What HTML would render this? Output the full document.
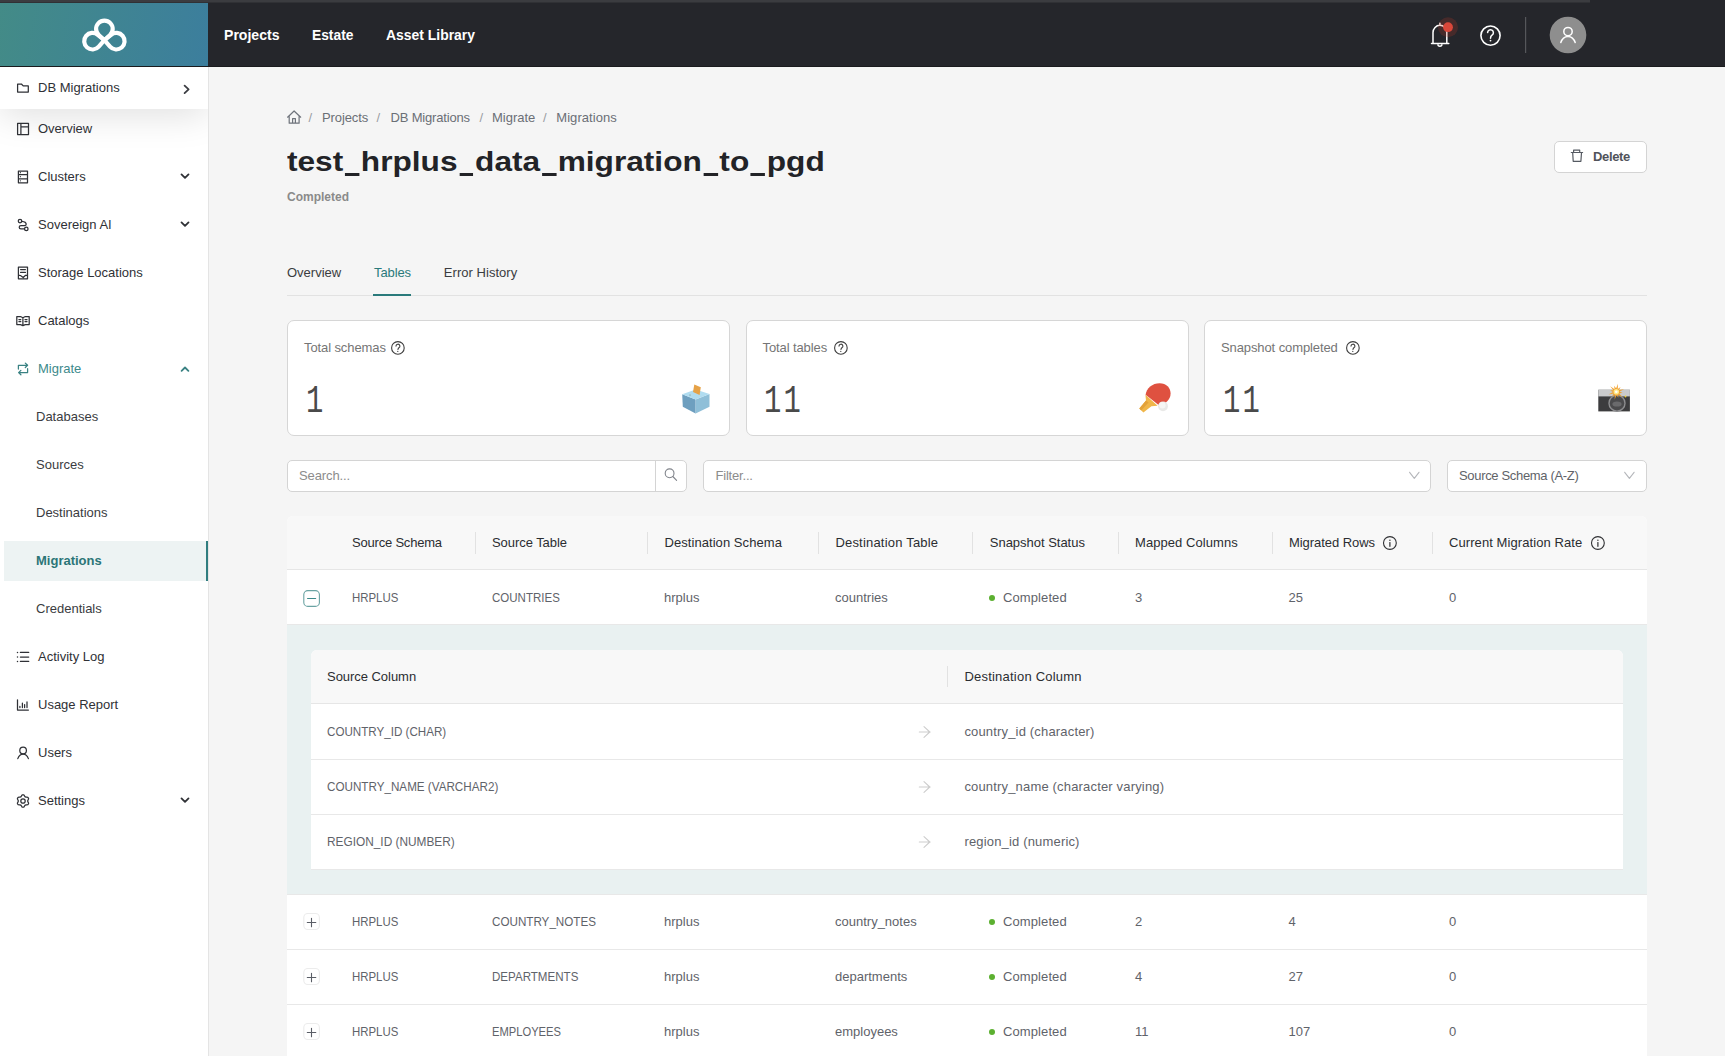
<!DOCTYPE html><html><head><meta charset="utf-8"><title>Migrations</title><style>
*{box-sizing:border-box;margin:0;padding:0}
html,body{width:1725px;height:1056px;overflow:hidden;background:#f5f5f5;font-family:"Liberation Sans", sans-serif}
.t{position:absolute;white-space:nowrap;line-height:20px}
.a{position:absolute}
svg{position:absolute;overflow:visible}
</style></head><body>
<div class="a" style="left:0;top:0;width:1725px;height:67px;background:#25262b"></div>
<div class="a" style="left:0;top:3px;width:208px;height:64px;background:linear-gradient(100deg,#438b87 0%,#3c7e9d 100%)"></div>
<div class="a" style="left:0;top:0;width:1590px;height:2px;background:#3b3c40"></div>
<div class="a" style="left:0;top:2px;width:1590px;height:1px;background:#303135"></div>
<div class="a" style="left:0;top:66px;width:1725px;height:1px;background:#1a1b1e"></div>
<div class="t" style="left:223.5px;top:25.2px;font-size:15.5px;color:#fff;letter-spacing:0px;font-weight:700;transform:scaleX(0.907);transform-origin:0 0">Projects</div>
<div class="t" style="left:311.5px;top:25.2px;font-size:15.5px;color:#fff;letter-spacing:0px;font-weight:700;transform:scaleX(0.89);transform-origin:0 0">Estate</div>
<div class="t" style="left:385.5px;top:25.2px;font-size:15.5px;color:#fff;letter-spacing:0px;font-weight:700;transform:scaleX(0.898);transform-origin:0 0">Asset Library</div>
<div class="a" style="left:0;top:67px;width:209px;height:989px;background:#fff;border-right:1px solid #e4e4e4"></div>
<div class="a" style="left:0;top:67px;width:208px;height:120px;overflow:hidden"><div class="a" style="left:0;top:0;width:208px;height:42px;background:#fff;box-shadow:0 6px 36px 0 rgba(0,0,0,0.13)"></div></div>
<div class="a" style="left:4px;top:541px;width:204px;height:40px;background:#edf3f3;border-right:2px solid #2f7d7f"></div>
<div class="t" style="left:38px;top:78.0px;font-size:13px;color:#2f3136;letter-spacing:0px;font-weight:400;">DB Migrations</div>
<!--chev DB Migrations-->
<div class="t" style="left:38px;top:119.1px;font-size:13px;color:#2f3136;letter-spacing:0px;font-weight:400;">Overview</div>
<div class="t" style="left:38px;top:167.1px;font-size:13px;color:#2f3136;letter-spacing:0px;font-weight:400;">Clusters</div>
<!--chev Clusters-->
<div class="t" style="left:38px;top:215.1px;font-size:13px;color:#2f3136;letter-spacing:0px;font-weight:400;">Sovereign AI</div>
<!--chev Sovereign AI-->
<div class="t" style="left:38px;top:263.1px;font-size:13px;color:#2f3136;letter-spacing:0px;font-weight:400;">Storage Locations</div>
<div class="t" style="left:38px;top:311.1px;font-size:13px;color:#2f3136;letter-spacing:0px;font-weight:400;">Catalogs</div>
<div class="t" style="left:38px;top:359.1px;font-size:13px;color:#3d8a8b;letter-spacing:0px;font-weight:400;">Migrate</div>
<!--chev Migrate-->
<div class="t" style="left:36px;top:407.1px;font-size:13px;color:#3a3c41;letter-spacing:0px;font-weight:400;">Databases</div>
<div class="t" style="left:36px;top:455.1px;font-size:13px;color:#3a3c41;letter-spacing:0px;font-weight:400;">Sources</div>
<div class="t" style="left:36px;top:503.1px;font-size:13px;color:#3a3c41;letter-spacing:0px;font-weight:400;">Destinations</div>
<div class="t" style="left:36px;top:551.1px;font-size:13px;color:#2b7577;letter-spacing:0px;font-weight:700;">Migrations</div>
<div class="t" style="left:36px;top:599.1px;font-size:13px;color:#3a3c41;letter-spacing:0px;font-weight:400;">Credentials</div>
<div class="t" style="left:38px;top:647.1px;font-size:13px;color:#2f3136;letter-spacing:0px;font-weight:400;">Activity Log</div>
<div class="t" style="left:38px;top:695.1px;font-size:13px;color:#2f3136;letter-spacing:0px;font-weight:400;">Usage Report</div>
<div class="t" style="left:38px;top:743.1px;font-size:13px;color:#2f3136;letter-spacing:0px;font-weight:400;">Users</div>
<div class="t" style="left:38px;top:791.1px;font-size:13px;color:#2f3136;letter-spacing:0px;font-weight:400;">Settings</div>
<!--chev Settings-->
<div class="t" style="left:322px;top:107.7px;font-size:13px;color:#6b6f76;letter-spacing:-0.1px;font-weight:400;">Projects</div>
<div class="t" style="left:390.5px;top:107.7px;font-size:13px;color:#6b6f76;letter-spacing:-0.18px;font-weight:400;">DB Migrations</div>
<div class="t" style="left:492px;top:107.7px;font-size:13px;color:#6b6f76;letter-spacing:0px;font-weight:400;">Migrate</div>
<div class="t" style="left:556.3px;top:107.7px;font-size:13px;color:#6b6f76;letter-spacing:0.05px;font-weight:400;">Migrations</div>
<div class="t" style="left:308.5px;top:107.7px;font-size:13px;color:#9a9da3;letter-spacing:0px;font-weight:400;">/</div>
<div class="t" style="left:376.5px;top:107.7px;font-size:13px;color:#9a9da3;letter-spacing:0px;font-weight:400;">/</div>
<div class="t" style="left:479.5px;top:107.7px;font-size:13px;color:#9a9da3;letter-spacing:0px;font-weight:400;">/</div>
<div class="t" style="left:543px;top:107.7px;font-size:13px;color:#9a9da3;letter-spacing:0px;font-weight:400;">/</div>
<div class="t" style="left:286.5px;top:153.7px;font-size:28.4px;color:#222327;letter-spacing:0px;font-weight:700;line-height:40px;top:141px;transform:scaleX(1.114);transform-origin:0 0">test<span style="display:inline-block;width:15.79px;height:0;position:relative"><span style="position:absolute;left:1.5px;right:1.5px;top:1.6px;height:3.2px;background:#222327"></span></span>hrplus<span style="display:inline-block;width:15.79px;height:0;position:relative"><span style="position:absolute;left:1.5px;right:1.5px;top:1.6px;height:3.2px;background:#222327"></span></span>data<span style="display:inline-block;width:15.79px;height:0;position:relative"><span style="position:absolute;left:1.5px;right:1.5px;top:1.6px;height:3.2px;background:#222327"></span></span>migration<span style="display:inline-block;width:15.79px;height:0;position:relative"><span style="position:absolute;left:1.5px;right:1.5px;top:1.6px;height:3.2px;background:#222327"></span></span>to<span style="display:inline-block;width:15.79px;height:0;position:relative"><span style="position:absolute;left:1.5px;right:1.5px;top:1.6px;height:3.2px;background:#222327"></span></span>pgd</div>
<div class="t" style="left:287px;top:186.7px;font-size:12px;color:#8a8a8a;letter-spacing:0px;font-weight:700;">Completed</div>
<div class="a" style="left:1554px;top:141px;width:93px;height:32px;background:#fff;border:1px solid #d4d4d4;border-radius:5px"></div>
<div class="t" style="left:1593px;top:147.2px;font-size:13px;color:#50535a;letter-spacing:-0.35px;font-weight:700;">Delete</div>
<div class="t" style="left:287px;top:263.2px;font-size:13px;color:#3a3c40;letter-spacing:0px;font-weight:400;">Overview</div>
<div class="t" style="left:374px;top:263.2px;font-size:13px;color:#2a7a7b;letter-spacing:-0.1px;font-weight:400;">Tables</div>
<div class="t" style="left:443.8px;top:263.2px;font-size:13px;color:#3a3c40;letter-spacing:0.04px;font-weight:400;">Error History</div>
<div class="a" style="left:287px;top:295px;width:1360px;height:1px;background:#e2e2e2"></div>
<div class="a" style="left:373px;top:294px;width:38px;height:2px;background:#2a7a7b"></div>
<div class="a" style="left:287px;top:320px;width:443px;height:116px;background:#fff;border:1px solid #d6d6d6;border-radius:7px"></div>
<div class="t" style="left:304px;top:338.0px;font-size:13px;color:#757575;letter-spacing:-0.1px;font-weight:400;">Total schemas</div>
<div class="t" style="left:305.5px;top:382px;font-family:'Liberation Mono',monospace;font-size:38px;line-height:40px;color:#4a4a4a;letter-spacing:3px;transform:scaleX(.76);transform-origin:0 0">1</div>
<div class="a" style="left:745.5px;top:320px;width:443px;height:116px;background:#fff;border:1px solid #d6d6d6;border-radius:7px"></div>
<div class="t" style="left:762.5px;top:338.0px;font-size:13px;color:#757575;letter-spacing:-0.1px;font-weight:400;">Total tables</div>
<div class="t" style="left:764.0px;top:382px;font-family:'Liberation Mono',monospace;font-size:38px;line-height:40px;color:#4a4a4a;letter-spacing:3px;transform:scaleX(.76);transform-origin:0 0">11</div>
<div class="a" style="left:1204px;top:320px;width:443px;height:116px;background:#fff;border:1px solid #d6d6d6;border-radius:7px"></div>
<div class="t" style="left:1221px;top:338.0px;font-size:13px;color:#757575;letter-spacing:-0.1px;font-weight:400;">Snapshot completed</div>
<div class="t" style="left:1222.5px;top:382px;font-family:'Liberation Mono',monospace;font-size:38px;line-height:40px;color:#4a4a4a;letter-spacing:3px;transform:scaleX(.76);transform-origin:0 0">11</div>
<div class="a" style="left:287px;top:460px;width:400px;height:32px;background:#fff;border:1px solid #d4d4d4;border-radius:5px"></div>
<div class="a" style="left:655px;top:461px;width:1px;height:30px;background:#d4d4d4"></div>
<div class="t" style="left:299px;top:466.2px;font-size:13px;color:#8c8c8c;letter-spacing:-0.1px;font-weight:400;">Search...</div>
<div class="a" style="left:703px;top:460px;width:728px;height:32px;background:#fff;border:1px solid #d4d4d4;border-radius:5px"></div>
<div class="t" style="left:715.5px;top:466.2px;font-size:13px;color:#8c8c8c;letter-spacing:-0.2px;font-weight:400;">Filter...</div>
<div class="a" style="left:1447px;top:460px;width:200px;height:32px;background:#fff;border:1px solid #d4d4d4;border-radius:5px"></div>
<div class="t" style="left:1459px;top:466.2px;font-size:13px;color:#5f6368;letter-spacing:-0.33px;font-weight:400;">Source Schema (A-Z)</div>
<div class="a" style="left:287px;top:516px;width:1360px;height:540px;background:#fff;border-radius:6px 6px 0 0;overflow:hidden">
<div class="a" style="left:0;top:0;width:1360px;height:54px;background:#f8f8f8;border-bottom:1px solid #e6e6e6"></div>
<div class="a" style="left:0;top:109px;width:1360px;height:269px;background:#e9f1f1"></div>
<div class="a" style="left:0;top:108px;width:1360px;height:1px;background:#e8e8e8"></div>
<div class="a" style="left:0;top:378px;width:1360px;height:1px;background:#e8e8e8"></div>
<div class="a" style="left:0;top:433px;width:1360px;height:1px;background:#e8e8e8"></div>
<div class="a" style="left:0;top:488px;width:1360px;height:1px;background:#e8e8e8"></div>
</div>
<div class="a" style="left:475px;top:532px;width:1px;height:22px;background:#e2e2e2"></div>
<div class="a" style="left:647px;top:532px;width:1px;height:22px;background:#e2e2e2"></div>
<div class="a" style="left:818px;top:532px;width:1px;height:22px;background:#e2e2e2"></div>
<div class="a" style="left:972px;top:532px;width:1px;height:22px;background:#e2e2e2"></div>
<div class="a" style="left:1118px;top:532px;width:1px;height:22px;background:#e2e2e2"></div>
<div class="a" style="left:1272px;top:532px;width:1px;height:22px;background:#e2e2e2"></div>
<div class="a" style="left:1432px;top:532px;width:1px;height:22px;background:#e2e2e2"></div>
<div class="t" style="left:352px;top:533.2px;font-size:13px;color:#2b2d31;letter-spacing:-0.2px;font-weight:400;">Source Schema</div>
<div class="t" style="left:492px;top:533.2px;font-size:13px;color:#2b2d31;letter-spacing:-0.06px;font-weight:400;">Source Table</div>
<div class="t" style="left:664.5px;top:533.2px;font-size:13px;color:#2b2d31;letter-spacing:0.06px;font-weight:400;">Destination Schema</div>
<div class="t" style="left:835.4px;top:533.2px;font-size:13px;color:#2b2d31;letter-spacing:0.2px;font-weight:400;">Destination Table</div>
<div class="t" style="left:989.8px;top:533.2px;font-size:13px;color:#2b2d31;letter-spacing:-0.02px;font-weight:400;">Snapshot Status</div>
<div class="t" style="left:1135px;top:533.2px;font-size:13px;color:#2b2d31;letter-spacing:0.07px;font-weight:400;">Mapped Columns</div>
<div class="t" style="left:1289px;top:533.2px;font-size:13px;color:#2b2d31;letter-spacing:-0.06px;font-weight:400;">Migrated Rows</div>
<div class="t" style="left:1449px;top:533.2px;font-size:13px;color:#2b2d31;letter-spacing:0.08px;font-weight:400;">Current Migration Rate</div>
<div class="a" style="left:311px;top:650px;width:1312px;height:220px;background:#fff;border-radius:6px 6px 0 0;overflow:hidden">
<div class="a" style="left:0;top:0;width:1312px;height:54px;background:#f8f8f8;border-bottom:1px solid #e6e6e6"></div>
<div class="a" style="left:0;top:109px;width:1312px;height:1px;background:#e8e8e8"></div>
<div class="a" style="left:0;top:164px;width:1312px;height:1px;background:#e8e8e8"></div>
<div class="a" style="left:0;top:219px;width:1312px;height:1px;background:#e8e8e8"></div>
</div>
<div class="a" style="left:947px;top:666px;width:1px;height:21px;background:#e2e2e2"></div>
<div class="t" style="left:327px;top:667.3px;font-size:13px;color:#2b2d31;letter-spacing:-0.04px;font-weight:400;">Source Column</div>
<div class="t" style="left:964.4px;top:667.3px;font-size:13px;color:#2b2d31;letter-spacing:0.22px;font-weight:400;">Destination Column</div>
<div class="t" style="left:327px;top:722.2px;font-size:13px;color:#5f636a;letter-spacing:0px;font-weight:400;transform:scaleX(0.894);transform-origin:0 0">COUNTRY_ID (CHAR)</div>
<div class="t" style="left:964.4px;top:722.2px;font-size:13px;color:#5f636a;letter-spacing:0.17px;font-weight:400;">country_id (character)</div>
<div class="t" style="left:327px;top:777.2px;font-size:13px;color:#5f636a;letter-spacing:0px;font-weight:400;transform:scaleX(0.897);transform-origin:0 0">COUNTRY_NAME (VARCHAR2)</div>
<div class="t" style="left:964.4px;top:777.2px;font-size:13px;color:#5f636a;letter-spacing:0.17px;font-weight:400;">country_name (character varying)</div>
<div class="t" style="left:327px;top:832.2px;font-size:13px;color:#5f636a;letter-spacing:0px;font-weight:400;transform:scaleX(0.912);transform-origin:0 0">REGION_ID (NUMBER)</div>
<div class="t" style="left:964.4px;top:832.2px;font-size:13px;color:#5f636a;letter-spacing:0.17px;font-weight:400;">region_id (numeric)</div>
<div class="t" style="left:352px;top:588.3px;font-size:13px;color:#5f636a;letter-spacing:0px;font-weight:400;transform:scaleX(0.878);transform-origin:0 0">HRPLUS</div>
<div class="t" style="left:492px;top:588.3px;font-size:13px;color:#5f636a;letter-spacing:0px;font-weight:400;transform:scaleX(0.886);transform-origin:0 0">COUNTRIES</div>
<div class="t" style="left:664px;top:588.3px;font-size:13px;color:#5f636a;letter-spacing:0px;font-weight:400;">hrplus</div>
<div class="t" style="left:835px;top:588.3px;font-size:13px;color:#5f636a;letter-spacing:0px;font-weight:400;">countries</div>
<div class="a" style="left:989px;top:595.1px;width:6px;height:6px;border-radius:50%;background:#5cb030"></div>
<div class="t" style="left:1003px;top:588.3px;font-size:13px;color:#5f636a;letter-spacing:0.1px;font-weight:400;">Completed</div>
<div class="t" style="left:1135px;top:588.3px;font-size:13px;color:#5f636a;letter-spacing:0px;font-weight:400;">3</div>
<div class="t" style="left:1288.5px;top:588.3px;font-size:13px;color:#5f636a;letter-spacing:0px;font-weight:400;">25</div>
<div class="t" style="left:1449px;top:588.3px;font-size:13px;color:#5f636a;letter-spacing:0px;font-weight:400;">0</div>
<div class="t" style="left:352px;top:912.2px;font-size:13px;color:#5f636a;letter-spacing:0px;font-weight:400;transform:scaleX(0.878);transform-origin:0 0">HRPLUS</div>
<div class="t" style="left:492px;top:912.2px;font-size:13px;color:#5f636a;letter-spacing:0px;font-weight:400;transform:scaleX(0.896);transform-origin:0 0">COUNTRY_NOTES</div>
<div class="t" style="left:664px;top:912.2px;font-size:13px;color:#5f636a;letter-spacing:0px;font-weight:400;">hrplus</div>
<div class="t" style="left:835px;top:912.2px;font-size:13px;color:#5f636a;letter-spacing:0px;font-weight:400;">country_notes</div>
<div class="a" style="left:989px;top:919.0px;width:6px;height:6px;border-radius:50%;background:#5cb030"></div>
<div class="t" style="left:1003px;top:912.2px;font-size:13px;color:#5f636a;letter-spacing:0.1px;font-weight:400;">Completed</div>
<div class="t" style="left:1135px;top:912.2px;font-size:13px;color:#5f636a;letter-spacing:0px;font-weight:400;">2</div>
<div class="t" style="left:1288.5px;top:912.2px;font-size:13px;color:#5f636a;letter-spacing:0px;font-weight:400;">4</div>
<div class="t" style="left:1449px;top:912.2px;font-size:13px;color:#5f636a;letter-spacing:0px;font-weight:400;">0</div>
<div class="t" style="left:352px;top:967.2px;font-size:13px;color:#5f636a;letter-spacing:0px;font-weight:400;transform:scaleX(0.878);transform-origin:0 0">HRPLUS</div>
<div class="t" style="left:492px;top:967.2px;font-size:13px;color:#5f636a;letter-spacing:0px;font-weight:400;transform:scaleX(0.89);transform-origin:0 0">DEPARTMENTS</div>
<div class="t" style="left:664px;top:967.2px;font-size:13px;color:#5f636a;letter-spacing:0px;font-weight:400;">hrplus</div>
<div class="t" style="left:835px;top:967.2px;font-size:13px;color:#5f636a;letter-spacing:0px;font-weight:400;">departments</div>
<div class="a" style="left:989px;top:974.0px;width:6px;height:6px;border-radius:50%;background:#5cb030"></div>
<div class="t" style="left:1003px;top:967.2px;font-size:13px;color:#5f636a;letter-spacing:0.1px;font-weight:400;">Completed</div>
<div class="t" style="left:1135px;top:967.2px;font-size:13px;color:#5f636a;letter-spacing:0px;font-weight:400;">4</div>
<div class="t" style="left:1288.5px;top:967.2px;font-size:13px;color:#5f636a;letter-spacing:0px;font-weight:400;">27</div>
<div class="t" style="left:1449px;top:967.2px;font-size:13px;color:#5f636a;letter-spacing:0px;font-weight:400;">0</div>
<div class="t" style="left:352px;top:1022.2px;font-size:13px;color:#5f636a;letter-spacing:0px;font-weight:400;transform:scaleX(0.878);transform-origin:0 0">HRPLUS</div>
<div class="t" style="left:492px;top:1022.2px;font-size:13px;color:#5f636a;letter-spacing:0px;font-weight:400;transform:scaleX(0.86);transform-origin:0 0">EMPLOYEES</div>
<div class="t" style="left:664px;top:1022.2px;font-size:13px;color:#5f636a;letter-spacing:0px;font-weight:400;">hrplus</div>
<div class="t" style="left:835px;top:1022.2px;font-size:13px;color:#5f636a;letter-spacing:0px;font-weight:400;">employees</div>
<div class="a" style="left:989px;top:1029.0px;width:6px;height:6px;border-radius:50%;background:#5cb030"></div>
<div class="t" style="left:1003px;top:1022.2px;font-size:13px;color:#5f636a;letter-spacing:0.1px;font-weight:400;">Completed</div>
<div class="t" style="left:1135px;top:1022.2px;font-size:13px;color:#5f636a;letter-spacing:0px;font-weight:400;">11</div>
<div class="t" style="left:1288.5px;top:1022.2px;font-size:13px;color:#5f636a;letter-spacing:0px;font-weight:400;">107</div>
<div class="t" style="left:1449px;top:1022.2px;font-size:13px;color:#5f636a;letter-spacing:0px;font-weight:400;">0</div>
<svg width="1725" height="1056" style="left:0;top:0" viewBox="0 0 1725 1056"><path d="M104.40,40.20L98.77,35.00A8.3,8.3 0 1 1 110.03,35.00Z" fill="none" stroke="#fff" stroke-width="4.2" stroke-linejoin="round"/><path d="M104.40,40.20L98.75,46.66A8.3,8.3 0 1 1 97.75,34.77Z" fill="none" stroke="#fff" stroke-width="4.2" stroke-linejoin="round"/><path d="M104.40,40.20L111.05,34.77A8.3,8.3 0 1 1 110.05,46.66Z" fill="none" stroke="#fff" stroke-width="4.2" stroke-linejoin="round"/><path d="M1433,43.4V32.5A6.9,7.2 0 0 1 1446.8,32.5V43.4M1431.5,43.4H1448.8M1439.9,24.8V23.2" fill="none" stroke="#fff" stroke-width="1.5" stroke-linecap="round"/><path d="M1437.9,44.2A2,2 0 0 0 1441.9,44.2" fill="none" stroke="#fff" stroke-width="1.5"/><circle cx="1448" cy="27.2" r="10" fill="#c0392b" fill-opacity="0.22"/><circle cx="1448" cy="27.2" r="4.9" fill="#d9473a"/><circle cx="1490.5" cy="35.6" r="9.6" fill="none" stroke="#fff" stroke-width="1.6"/><path d="M1487.6,32.6A2.9,2.9 0 1 1 1492,35.2C1490.9,36 1490.5,36.6 1490.5,38.3" fill="none" stroke="#fff" stroke-width="1.5" stroke-linecap="round"/><circle cx="1490.5" cy="40.6" r="0.9" fill="#fff"/><rect x="1525" y="17" width="1.2" height="36" fill="#56575b"/><circle cx="1568" cy="35" r="18.3" fill="#8e8e8e"/><circle cx="1568" cy="31.6" r="4.2" fill="none" stroke="#fff" stroke-width="1.5"/><path d="M1560.8,42.6C1562,38.8 1564.6,36.4 1568,36.4C1571.4,36.4 1574,38.8 1575.2,42.6" fill="none" stroke="#fff" stroke-width="1.5" stroke-linecap="round"/><path d="M17.6,84H21.4L23.2,85.9H28.3V92H17.6Z" fill="none" stroke="#2f3136" stroke-width="1.25" stroke-linejoin="round" stroke-linecap="round"/><path d="M17.6,123.3H28.5V134.6H17.6ZM20.9,123.3V134.6M20.9,126.8H28.5" fill="none" stroke="#2f3136" stroke-width="1.25" stroke-linejoin="round" stroke-linecap="round"/><path d="M18.4,171H27.5V182.8H18.4ZM18.4,174.7H27.5M18.4,178.8H27.5" fill="none" stroke="#2f3136" stroke-width="1.25" stroke-linejoin="round" stroke-linecap="round"/><circle cx="20.4" cy="172.7" r="0.6" fill="#2f3136"/><circle cx="20.4" cy="176.7" r="0.6" fill="#2f3136"/><circle cx="20.4" cy="180.8" r="0.6" fill="#2f3136"/><circle cx="20" cy="221" r="1.75" fill="none" stroke="#2f3136" stroke-width="1.25" stroke-linejoin="round" stroke-linecap="round"/><circle cx="26.3" cy="228.9" r="1.75" fill="none" stroke="#2f3136" stroke-width="1.25" stroke-linejoin="round" stroke-linecap="round"/><path d="M21.8,221.3C24,221.5 26.2,222.6 26.2,224.2C26.2,225.3 25.4,225.6 24.5,225.6H21C19.6,225.6 19.2,226.5 19.2,227.3C19.2,228.2 19.9,228.9 21,228.9H24.5" fill="none" stroke="#2f3136" stroke-width="1.25" stroke-linejoin="round" stroke-linecap="round"/><path d="M18.4,267H27.5V278.8H18.4ZM20.6,269.6H25.4M20.6,272.4H25.4M18.4,275.2L20.4,275.5L23.2,277.5L25.6,275.3H27.5" fill="none" stroke="#2f3136" stroke-width="1.25" stroke-linejoin="round" stroke-linecap="round"/><path d="M16.8,316.5H20.5L22.9,317.7L25.3,316.5H29.2V324.6H25.3L22.9,325.6L20.5,324.6H16.8ZM22.9,317.7V325.4" fill="none" stroke="#2f3136" stroke-width="1.25" stroke-linejoin="round" stroke-linecap="round"/><path d="M18.9,319.5H20.8M18.9,321.5H20.8M25,319.5H27M25,321.5H27" fill="none" stroke="#2f3136" stroke-width="1.25" stroke-linejoin="round" stroke-linecap="round"/><path d="M18.4,369V365.3H27.4M25.3,363.1L27.6,365.3L25.3,367.5M27.6,368.7V372.6H18.8M20.9,370.4L18.6,372.6L20.9,374.8" fill="none" stroke="#3a8283" stroke-width="1.25" stroke-linejoin="round" stroke-linecap="round"/><circle cx="17.5" cy="652.4" r="0.75" fill="#2f3136"/><path d="M20.4,652.4H28.7" fill="none" stroke="#2f3136" stroke-width="1.25" stroke-linejoin="round" stroke-linecap="round"/><circle cx="17.5" cy="657" r="0.75" fill="#2f3136"/><path d="M20.4,657H28.7" fill="none" stroke="#2f3136" stroke-width="1.25" stroke-linejoin="round" stroke-linecap="round"/><circle cx="17.5" cy="661.4" r="0.75" fill="#2f3136"/><path d="M20.4,661.4H28.7" fill="none" stroke="#2f3136" stroke-width="1.25" stroke-linejoin="round" stroke-linecap="round"/><path d="M17.5,699.8V710H28.4M19.9,706.3V707.6M22.4,703.2V707.6M24.6,704.5V707.6M27,701.9V707.6" fill="none" stroke="#2f3136" stroke-width="1.25" stroke-linejoin="round" stroke-linecap="round"/><circle cx="23.1" cy="750.5" r="3.3" fill="none" stroke="#2f3136" stroke-width="1.25" stroke-linejoin="round" stroke-linecap="round"/><path d="M17.8,758.6C18.9,755.6 20.7,754 23.1,754C25.5,754 27.3,755.6 28.4,758.6" fill="none" stroke="#2f3136" stroke-width="1.25" stroke-linejoin="round" stroke-linecap="round"/><path d="M23.00,794.90L23.80,794.95L24.41,795.74L24.84,796.57L25.40,796.84L25.92,797.19L26.85,797.15L27.84,797.29L28.28,797.95L28.64,798.67L28.26,799.59L27.76,800.37L27.80,801.00L27.76,801.63L28.26,802.41L28.64,803.33L28.28,804.05L27.84,804.71L26.85,804.85L25.92,804.81L25.40,805.16L24.84,805.43L24.41,806.26L23.80,807.05L23.00,807.10L22.20,807.05L21.59,806.26L21.16,805.43L20.60,805.16L20.08,804.81L19.15,804.85L18.16,804.71L17.72,804.05L17.36,803.33L17.74,802.41L18.24,801.63L18.20,801.00L18.24,800.37L17.74,799.59L17.36,798.67L17.72,797.95L18.16,797.29L19.15,797.15L20.08,797.19L20.60,796.84L21.16,796.57L21.59,795.74L22.20,794.95Z" fill="none" stroke="#2f3136" stroke-width="1.25" stroke-linejoin="round" stroke-linecap="round"/><circle cx="23" cy="801" r="2.2" fill="none" stroke="#2f3136" stroke-width="1.25" stroke-linejoin="round" stroke-linecap="round"/><path d="M184.6,85.7L188.6,89.4L184.6,93.1" fill="none" stroke="#3b3d42" stroke-width="1.8" stroke-linecap="round" stroke-linejoin="round"/><path d="M181.5,174.4L185,177.9L188.5,174.4" fill="none" stroke="#2f3136" stroke-width="1.8" stroke-linecap="round" stroke-linejoin="round"/><path d="M181.5,222.4L185,225.9L188.5,222.4" fill="none" stroke="#2f3136" stroke-width="1.8" stroke-linecap="round" stroke-linejoin="round"/><path d="M181.5,798.4L185,801.9L188.5,798.4" fill="none" stroke="#2f3136" stroke-width="1.8" stroke-linecap="round" stroke-linejoin="round"/><path d="M181.6,370.9L185,367.5L188.4,370.9" fill="none" stroke="#3a8283" stroke-width="1.8" stroke-linecap="round" stroke-linejoin="round"/><path d="M287.6,117.2L294.1,111L300.7,117.2M289.2,116V123.2H299.1V116M292.6,123.2V118.6H295.4V123.2" fill="none" stroke="#6e737b" stroke-width="1.2" stroke-linejoin="round" stroke-linecap="round"/><path d="M1571.3,152.5H1582.6M1573.6,152.3V150.2H1579.7V152.3M1572.7,152.7L1573.2,161.3H1580.9L1581.5,152.7" fill="none" stroke="#555a62" stroke-width="1.2" stroke-linejoin="round" stroke-linecap="round"/><circle cx="397.9" cy="347.9" r="6.3" fill="none" stroke="#3d3d3d" stroke-width="1.1"/><path d="M396.0,346.1A1.95,1.95 0 1 1 398.9,347.8C398.2,348.3 398.09999999999997,348.7 398.0,349.5" fill="none" stroke="#3d3d3d" stroke-width="1.1" stroke-linecap="round"/><circle cx="397.79999999999995" cy="351.4" r="0.6" fill="#3d3d3d"/><circle cx="840.9" cy="347.9" r="6.3" fill="none" stroke="#3d3d3d" stroke-width="1.1"/><path d="M839.0,346.1A1.95,1.95 0 1 1 841.9,347.8C841.1999999999999,348.3 841.1,348.7 841.0,349.5" fill="none" stroke="#3d3d3d" stroke-width="1.1" stroke-linecap="round"/><circle cx="840.8" cy="351.4" r="0.6" fill="#3d3d3d"/><circle cx="1352.9" cy="347.9" r="6.3" fill="none" stroke="#3d3d3d" stroke-width="1.1"/><path d="M1351.0,346.1A1.95,1.95 0 1 1 1353.9,347.8C1353.2,348.3 1353.1000000000001,348.7 1353.0,349.5" fill="none" stroke="#3d3d3d" stroke-width="1.1" stroke-linecap="round"/><circle cx="1352.8000000000002" cy="351.4" r="0.6" fill="#3d3d3d"/><circle cx="669.6" cy="473.3" r="4.4" fill="none" stroke="#80848b" stroke-width="1.1"/><path d="M672.8,476.5L676.6,480.4" stroke="#80848b" stroke-width="1.1" stroke-linecap="round"/><path d="M1409.6,472.3L1414.3,478.4L1419.0,472.3" fill="none" stroke="#b5b7bb" stroke-width="1.1" stroke-linecap="round" stroke-linejoin="round"/><path d="M1624.7,472.3L1629.4,478.4L1634.1000000000001,472.3" fill="none" stroke="#b5b7bb" stroke-width="1.1" stroke-linecap="round" stroke-linejoin="round"/><circle cx="1389.9" cy="543" r="6.4" fill="none" stroke="#2f3033" stroke-width="1.1"/><path d="M1389.9,542.6V546.3" stroke="#2f3033" stroke-width="1.2" stroke-linecap="round"/><circle cx="1389.9" cy="540.3" r="0.7" fill="#2f3033"/><circle cx="1597.9" cy="543" r="6.4" fill="none" stroke="#2f3033" stroke-width="1.1"/><path d="M1597.9,542.6V546.3" stroke="#2f3033" stroke-width="1.2" stroke-linecap="round"/><circle cx="1597.9" cy="540.3" r="0.7" fill="#2f3033"/><rect x="303.8" y="590.6" width="15.6" height="15.8" rx="4" fill="none" stroke="#6aa3a3" stroke-width="1.1"/><path d="M307.6,598.5H315.6" stroke="#3d8a8b" stroke-width="1.2" stroke-linecap="round"/><rect x="303.8" y="913.5" width="15.6" height="16" rx="4" fill="none" stroke="#ececec" stroke-width="1.1"/><path d="M307.3,922.5H315.8M311.5,918.2V926.7" stroke="#5a5e66" stroke-width="1.1" stroke-linecap="round"/><rect x="303.8" y="968.5" width="15.6" height="16" rx="4" fill="none" stroke="#ececec" stroke-width="1.1"/><path d="M307.3,977.5H315.8M311.5,973.2V981.7" stroke="#5a5e66" stroke-width="1.1" stroke-linecap="round"/><rect x="303.8" y="1023.5" width="15.6" height="16" rx="4" fill="none" stroke="#ececec" stroke-width="1.1"/><path d="M307.3,1032.5H315.8M311.5,1028.2V1036.7" stroke="#5a5e66" stroke-width="1.1" stroke-linecap="round"/><path d="M919.3,732H930.2M924,726.6L929.8,732L924,737.4" fill="none" stroke="#cdcdcd" stroke-width="1.1" stroke-linecap="round" stroke-linejoin="round"/><path d="M919.3,787H930.2M924,781.6L929.8,787L924,792.4" fill="none" stroke="#cdcdcd" stroke-width="1.1" stroke-linecap="round" stroke-linejoin="round"/><path d="M919.3,842H930.2M924,836.6L929.8,842L924,847.4" fill="none" stroke="#cdcdcd" stroke-width="1.1" stroke-linecap="round" stroke-linejoin="round"/><path d="M682.2,394.3L695.6,399.5V413.6L682.8,406.8Z" fill="#6e9fbf"/><path d="M695.6,399.5L709.5,394.1V406.8L695.6,413.6Z" fill="#8fbfd8"/><path d="M682.2,394.3L695.6,389.6L709.5,394.1L695.6,399.5Z" fill="#b0dcf0"/><path d="M694.3,384.5L700.8,387.2L699.6,394.9L693,392Z" fill="#e6a247"/><ellipse cx="690" cy="395" rx="1" ry="0.6" fill="#8aa"/><path d="M1145.4,394.8L1157.6,405.8L1151.4,406.2L1143.4,412.6L1139.3,408.6L1146,400.6Z" fill="#f0b64a"/><path d="M1146,400.6L1139.3,408.6L1141.2,410.6L1148.6,402.6Z" fill="#e3a23a"/><path d="M1145.6,394.8C1146.3,388 1152.5,383.2 1159.6,383.2C1166.3,383.2 1170.6,387.8 1170.6,393.6C1170.6,399.5 1165.7,404.6 1158.6,404.9Z" fill="#df5140"/><circle cx="1163" cy="406.3" r="4.9" fill="#e9e9e7"/><circle cx="1162.4" cy="405.3" r="3.2" fill="#f6f6f4"/><rect x="1598.3" y="389.8" width="31.6" height="21.6" fill="#3c3c3e"/><rect x="1598.3" y="389.8" width="31.6" height="6.6" fill="#c9cacc"/><circle cx="1617" cy="403.2" r="8" fill="#4a4a4c" stroke="#8d8d8f" stroke-width="1.4"/><ellipse cx="1617" cy="404" rx="4.6" ry="2.6" fill="#6a6a6c"/><path d="M1617.93,383.76L1617.73,388.94L1620.54,387.00L1618.97,390.03L1624.07,389.19L1619.49,391.60L1622.57,393.07L1619.16,393.23L1622.45,397.23L1618.07,394.47L1618.34,397.87L1616.50,394.99L1614.67,399.84L1614.87,394.66L1612.06,396.60L1613.63,393.57L1608.53,394.41L1613.11,392.00L1610.03,390.53L1613.44,390.37L1610.15,386.37L1614.53,389.13L1614.26,385.73L1616.10,388.61Z" fill="#f2a02a"/><circle cx="1616.3" cy="391.8" r="2.8" fill="#ffe98a"/><circle cx="1616.3" cy="391.8" r="1.3" fill="#fff"/><circle cx="1625.5" cy="396.5" r="0.9" fill="#f2d23a"/></svg>
</body></html>
